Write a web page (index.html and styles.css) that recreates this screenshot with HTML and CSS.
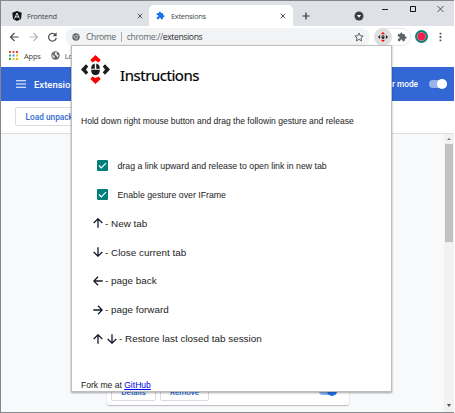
FILE: index.html
```html
<!DOCTYPE html>
<html lang="en">
<head>
<meta charset="utf-8">
<title>Extensions</title>
<link rel="stylesheet" href="styles.css">
</head>
<body>
<svg width="0" height="0" class="defs">
  <symbol id="puzzle" viewBox="0 0 24 24"><path d="M20.5 11H19V7c0-1.1-.9-2-2-2h-4V3.500a2.500 2.500 0 0 0-5 0V5H4c-1.100 0-2 .9-2 2v3.800h1.500a2.700 2.700 0 0 1 0 5.400H2V20c0 1.100.9 2 2 2h3.800v-1.500a2.700 2.700 0 0 1 5.400 0V22H17c1.100 0 2-.9 2-2v-4h1.500a2.500 2.500 0 0 0 0-5z"/></symbol>
  <symbol id="logo" viewBox="0 0 28 28">
    <g fill="#f00"><path d="M14 0 19 4.800 17 7.300 14 5.300 11 7.300 9 4.800z"/><path d="M14 28 19 23.200 17 20.700 14 22.300 11 20.700 9 23.200z"/></g>
    <g fill="#1d1d1d"><path d="M0 14 4.800 9 7 11 4.800 14 7 17 4.800 19z"/><path d="M28 14 23.200 9 21 11 23.200 14 21 17 23.200 19z"/>
    <path d="M9.800 13.300c0-3 1-4.500 3.500-4.800v4.800zM14.700 8.500c2.500.3 3.500 1.800 3.500 4.800h-3.500zM9.800 14.300h8.400c0 3.400-1.200 5.200-4.200 5.200s-4.200-1.800-4.200-5.200z"/></g>
  </symbol>
  <symbol id="arrow" viewBox="0 0 10 10"><path d="M5 9.700V1M.7 5 5 .8 9.300 5" fill="none" stroke="currentColor" stroke-width="1.300"/></symbol>
  <symbol id="check" viewBox="0 0 11 11"><rect width="11" height="11" rx="1" fill="#00807c"/><path d="M2 5.500 4.300 7.900 9 3.100" fill="none" stroke="#fff" stroke-width="1.200"/></symbol>
  <symbol id="close" viewBox="0 0 8 8"><path d="M1 1 7 7M7 1 1 7" fill="none" stroke="currentColor" stroke-width="1.200"/></symbol>
</svg>
<div class="window">
  <div class="tabs">
    <div class="tab">
      <svg class="angular" viewBox="0 0 10 10"><path d="M5 0 9.700 1.700 9 8 5 10 1 8 .3 1.700z" fill="#111"/><path d="M2.600 7.500 5 2 7.400 7.500M3.500 5.900h3" fill="none" stroke="#fff" stroke-width=".9"/></svg>
      <span class="fit tab-a">Frontend</span><svg class="x"><use href="#close"/></svg>
    </div>
    <div class="tab active">
      <svg class="puzzle"><use href="#puzzle"/></svg>
      <span class="fit tab-b">Extensions</span><svg class="x"><use href="#close"/></svg>
    </div>
    <svg class="plus" viewBox="0 0 8 8"><path d="M4 .5v7M.5 4h7" stroke="#333" stroke-width="1.200"/></svg>
    <svg class="media" viewBox="0 0 10 10"><circle cx="5" cy="5" r="4.500" fill="#3c4043"/><path d="M3 3.900h4L5 6.700z" fill="#fff"/></svg>
    <svg class="controls" viewBox="0 0 64 12"><path d="M1 6.500h6" stroke="#222"/><path d="M29.500 3.500h5v5h-5z" fill="none" stroke="#111"/><path d="m56.500 3 6 6m0-6-6 6" stroke="#333" stroke-width=".8"/></svg>
  </div>
  <div class="toolbar">
    <svg class="nav" viewBox="0 0 52 12"><g fill="none" stroke-width="1.200"><path d="M9.500 6H1.500M5.500 2l-4 4 4 4" stroke="#4a4d51"/><path d="M20.500 6h8M24.500 2l4 4-4 4" stroke="#b5b7ba"/><path d="M46.500 3.700A3.900 3.900 0 1 0 47.300 7" stroke="#4a4d51"/></g><path d="M47.600 1.300v4h-4z" fill="#4a4d51"/></svg>
    <div class="omnibox">
      <svg class="chrome" viewBox="0 0 8 8"><circle cx="4" cy="4" r="3.700" fill="#5f6368"/><circle cx="4" cy="4" r="1.500" fill="#5f6368" stroke="#e4e6e8" stroke-width=".6"/><path d="M4 2.200h3.300M2.500 5 .9 2.200M5.500 5 3.900 7.700" stroke="#e4e6e8" stroke-width=".5"/></svg>
      <span class="fit site">Chrome</span><i class="bar"></i><span class="fit url"><em>chrome://</em>extensions</span>
      <svg class="star" viewBox="0 0 10 10"><path d="m5 1 1.200 2.700 2.900.3L7 6l.6 2.900L5 7.400 2.400 8.900 3 6 .9 4l2.900-.3z" fill="none" stroke="#505357" stroke-width=".9"/></svg>
    </div>
    <div class="actions"><span class="current"><svg><use href="#logo"/></svg></span><svg class="ext"><use href="#puzzle"/></svg></div>
    <span class="avatar"></span>
    <svg class="dots" viewBox="0 0 3 10"><path d="M.6.800h1.800v1.800H.6zM.6 4.100h1.800v1.800H.6zM.6 7.400h1.800v1.800H.6z" fill="#54575b"/></svg>
  </div>
  <div class="bookmarks">
    <svg class="apps" viewBox="0 0 9 9"><path d="M0 0h2v2H0zM3.500 0h2v2h-2zM7 0h2v2H7z" fill="#ea4335"/><path d="M0 3.500h2v2H0z" fill="#34a853"/><path d="M3.500 3.500h2v2h-2z" fill="#4285f4"/><path d="M7 3.500h2v2H7zM3.500 7h2v2h-2zM7 7h2v2H7z" fill="#fbbc04"/><path d="M0 7h2v2H0z" fill="#34a853"/></svg>
    <span class="fit apps-text">Apps</span>
    <svg class="globe" viewBox="0 0 9 9"><circle cx="4.500" cy="4.500" r="4.200" fill="#5f6368"/><path d="M1 3.500 3.500 5v2.500L1.500 6zM4 1.300h2.500L5.500 3 7.800 4.500 6.500 6.500 5 4.500 3.500 3.500z" fill="#e6e8ea"/></svg>
    <span class="fit local">Localhost</span>
  </div>
  <div class="header">
    <svg class="menu" viewBox="0 0 10 8"><path d="M0 .8h10M0 4h10M0 7.200h10" stroke="#fff" stroke-width="1.100"/></svg>
    <span class="fit title">Extensions</span><span class="fit mode">Developer mode</span><span class="toggle light"></span>
  </div>
  <div class="devbar"><span class="load"><span class="fit">Load unpacked</span></span></div>
  <div class="content">
    <div class="card"><span class="btn details">Details</span><span class="btn remove">Remove</span><span class="toggle blue"></span></div>
    <div class="scroll"><i class="up"></i><i class="thumb"></i><i class="down"></i></div>
  </div>
</div>
<div class="popup">
  <div class="brand"><svg><use href="#logo"/></svg><h1 class="fit">Instructions</h1></div>
  <p class="lead fit">Hold down right mouse button and drag the followin gesture and release</p>
  <div class="option"><svg><use href="#check"/></svg><span class="fit opt-a">drag a link upward and release to open link in new tab</span></div>
  <div class="option"><svg><use href="#check"/></svg><span class="fit opt-b">Enable gesture over IFrame</span></div>
  <div class="gesture"><svg><use href="#arrow"/></svg><span>- New tab</span></div>
  <div class="gesture"><svg class="south"><use href="#arrow"/></svg><span>- Close current tab</span></div>
  <div class="gesture"><svg class="west"><use href="#arrow"/></svg><span>- page back</span></div>
  <div class="gesture"><svg class="east"><use href="#arrow"/></svg><span>- page forward</span></div>
  <div class="gesture"><svg><use href="#arrow"/></svg><svg class="south second"><use href="#arrow"/></svg><span>- Restore last closed tab session</span></div>
  <p class="fork fit">Fork me at <a href="#">GitHub</a></p>
</div>
</body>
</html>
```

FILE: styles.css
```css
* { box-sizing: border-box; }
body { margin: 0; width: 455px; height: 413px; overflow: hidden; background: #fff; position: relative; font-family: "Open Sans", "Noto Sans", sans-serif; }
svg { display: block; flex: none; }
.defs { position: absolute; }
.fit { white-space: nowrap; flex: none; }
.window { width: 454px; height: 413px; border: 1px solid #85878c; border-right: 0; display: flex; flex-direction: column; overflow: hidden; }
.tabs { height: 25px; flex: none; background: #dee1e6; display: flex; align-items: center; padding-top: 4px; color: #45494d; font-size: 7.5px; letter-spacing: -.3px; }
.tab { width: 148px; height: 21px; display: flex; align-items: center; padding: 0 6px 0 11px; }
.tab.active { width: 144px; background: #fff; border-radius: 5px 5px 0 0; padding-left: 7px; padding-right: 7px; }
.angular { width: 10px; height: 10px; margin-right: 5px; }
.x { width: 6px; height: 6px; margin-left: auto; color: #444; }
.puzzle { width: 9px; height: 9px; fill: #1a73e8; margin-right: 6px; }
.plus { width: 8px; height: 8px; margin-left: 9px; }
.media { width: 10px; height: 10px; margin-left: 44px; }
.controls { width: 64px; height: 12px; margin: -14px 0 0 17px; }
.toolbar { height: 21px; flex: none; display: flex; align-items: center; padding: 0 0 0 8px; }
.nav { width: 52px; height: 12px; }
.omnibox { width: 305px; height: 18px; margin-left: 4px; padding: 0 6px 0 7px; background: #f1f3f4; border-radius: 9px; display: flex; align-items: center; font-size: 8.6px; color: #5f6368; }
.chrome { width: 8px; height: 8px; margin-right: 6px; }
.site { letter-spacing: -.4px; }
.bar { width: 1px; height: 10px; background: #aaadb1; margin: 0 5px; }
.url { color: #2b2d30; letter-spacing: -.38px; }
.url em { font-style: normal; color: #686c70; }
.star { width: 10px; height: 10px; margin-left: auto; }
.actions { width: 37px; height: 18px; margin-left: 4px; border: 1px solid #e6e7e9; border-radius: 9px; display: flex; align-items: center; }
.current { width: 18px; height: 18px; margin-left: -1px; border-radius: 50%; background: #dfdfdf; display: flex; align-items: center; justify-content: center; }
.current svg { width: 10px; height: 10px; }
.ext { width: 10px; height: 10px; margin-left: 5px; fill: #5f6368; }
.avatar { width: 13px; height: 13px; margin-left: 4px; border-radius: 50%; background: #f31d50; border: 2px solid #078477; box-shadow: inset 0 0 0 .6px #cbb; }
.dots { width: 3px; height: 10px; margin-left: 11px; }
.bookmarks { height: 20px; flex: none; display: flex; align-items: center; padding: 0 0 3px 8px; font-size: 7.5px; letter-spacing: -.2px; color: #3f4347; }
.apps { width: 9px; height: 9px; margin-right: 6px; }
.globe { width: 9px; height: 9px; margin: 0 5px 0 10px; }
.header { height: 34px; flex: none; background: #3367d6; display: flex; align-items: center; padding: 0 7px 0 15px; color: #fff; font: 500 9.5px Roboto, sans-serif; }
.menu { width: 10px; height: 8px; margin-right: 8px; }
.mode { margin-left: auto; margin-right: 11px; font-size: 8.3px; }
.toggle { width: 18px; height: 8px; border-radius: 4px; display: flex; justify-content: flex-end; align-items: center; flex: none; }
.toggle::after { content: ""; width: 10px; height: 10px; border-radius: 50%; flex: none; background: #fff; }
.light { background: #99b3eb; }
.blue { background: #8ab4f8; }
.blue::after { background: #1a73e8; }
.devbar { height: 32px; flex: none; padding: 6px 14px; }
.load { display: flex; align-items: center; width: 84px; height: 19px; border: 1px solid #dadce0; border-radius: 2px; padding-left: 9.500px; font: 500 8.3px Roboto, sans-serif; color: #2f6bd0; }
.content { flex: 1; background: #f8f9fb; border-top: 1px solid #dcdfe3; display: flex; align-items: flex-end; }
.card { width: 242px; height: 160px; margin: 0 0 7px 106px; background: #fff; border-radius: 2px; box-shadow: 0 1px 1px #babdc3, 0 0 1px #babdc3; display: flex; align-items: flex-end; padding: 0 12px 4px 4px; font: 500 8px Roboto, sans-serif; color: #1967d2; }
.btn { height: 17px; width: 45px; border: 1px solid #dadce0; border-radius: 2px; text-align: center; line-height: 15px; margin-right: 4px; }
.remove { width: 49px; }
.blue { margin: 0 0 6px auto; }
.scroll { width: 10px; height: 100%; margin-left: auto; background: #f1f1f1; display: flex; flex-direction: column; align-items: center; }
.up, .down { border: 2px solid transparent; height: 0; }
.up { border-top: 0; border-bottom: 2px solid #777; margin: 4px 0; height: 2px; }
.down { border-top: 3px solid #505050; border-bottom: 0; height: 3px; margin: auto 0 5px; }
.thumb { width: 8px; height: 98px; background: #c1c1c1; }
.popup { position: absolute; left: 71px; top: 45px; width: 321px; height: 347px; background: #fff; border: 1px solid #bdbdbd; box-shadow: 0 1px 2px rgba(0,0,0,.35); padding: 9px 9px 0; font-family: "Liberation Sans", Arial, sans-serif; color: #222; }
.brand { display: flex; height: 44px; }
.brand svg { width: 29px; height: 29px; }
h1 { margin: 10px 0 0 10px; font: 400 15px/20px "Noto Sans", sans-serif; color: #000; letter-spacing: -.45px; -webkit-text-stroke: .2px #000; }
.lead { margin: 17px 0 29px; font-size: 8.55px; line-height: 10px; }
.option { display: flex; align-items: center; height: 29px; padding-left: 16px; font-size: 8.75px; }
.option svg { width: 11px; height: 11px; margin-right: 9.500px; }
.lead + .option { margin-top: -4px; }
.gesture { display: flex; align-items: center; height: 28.8px; padding-left: 12px; font-size: 9.9px; white-space: nowrap; }
.gesture svg { width: 10px; height: 10px; margin-right: 2px; color: #17172c; }
.gesture .second { margin-left: 2px; }
.south { transform: rotate(180deg); }
.west { transform: rotate(-90deg); }
.east { transform: rotate(90deg); }
.fork { margin: 26px 0 0; font-size: 8.55px; line-height: 12px; }
.fork a { color: #00e; }
```
